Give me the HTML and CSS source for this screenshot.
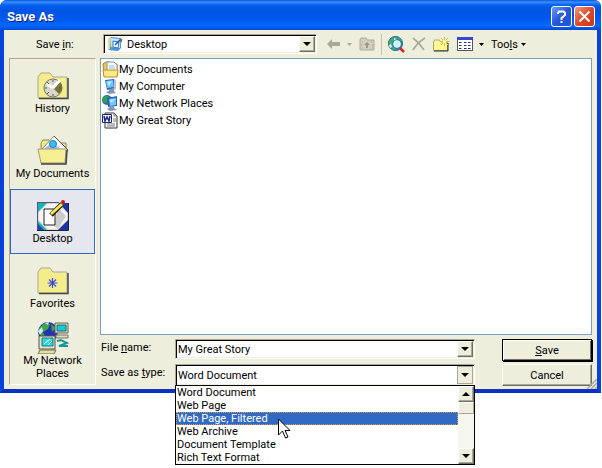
FILE: index.html
```html
<!DOCTYPE html>
<html lang="en">
<head>
    <meta charset="UTF-8">
    <meta name="viewport" content="width=device-width, initial-scale=1.0">
    <title>Save As</title>
    <link rel="stylesheet" href="styles.css">
</head>
<body>
    <form class="dialog">
        <header class="title-bar">
            <h1>Save As</h1>
            <button type="button" class="title-btn" aria-label="Help">
                <svg width="19" height="19" viewBox="0 0 19 19" fill="none" stroke="#fff" stroke-width="2"><path d="M6 7V6l1-1.500h4.500L13 6v2l-3.500 3v2M9.500 14v2"/></svg>
            </button>
            <button type="button" class="title-btn close" aria-label="Close">
                <svg width="19" height="19" viewBox="0 0 19 19" fill="none" stroke="#fff" stroke-width="2"><path d="M4.500 4.500l10 10M14.500 4.500l-10 10"/></svg>
            </button>
        </header>

        <div class="dialog-body">
            <div class="toolbar">
                <label class="save-in" for="folder">Save <u>i</u>n:</label>
                <div class="combo folder-combo">
                    <svg class="combo-icon" width="16" height="16" viewBox="0 0 16 16">
                        <path d="M1 3l3-2 10 1v10l-3 3-10-1z" fill="#4a94dc"/>
                        <path d="M1 3l3-2-1 12-2 1z" fill="#e9dc92"/>
                        <path d="M4 2l9 1v9l-9-1z" fill="#c4e6fa"/>
                        <path d="M6 5l6 1-1 6-5-1z" fill="#fff" stroke="#2878d0"/>
                        <path d="M8 9l6-6" stroke="#14559e" stroke-width="1.500"/>
                        <path d="M13 3h2v3h-1z" fill="#d4431b"/>
                    </svg>
                    <select id="folder"><option>Desktop</option></select>
                    <span class="arrow-btn"><svg width="8" height="4" viewBox="0 0 8 4"><path d="M0 0h8L4 4z"/></svg></span>
                </div>
                <div class="tools">
                    <button type="button" class="tool back" aria-label="Back">
                        <svg width="13" height="12" viewBox="0 0 13 12" fill="#aca899"><path d="M0 6l5-5v3h8v4H5v3z"/></svg>
                        <svg width="5" height="3" viewBox="0 0 5 3" fill="#aca899"><path d="M0 0h5L2.500 3z"/></svg>
                    </button>
                    <button type="button" class="tool up" aria-label="Up one level">
                        <svg width="16" height="14" viewBox="0 0 16 14">
                            <path d="M1 3l1-2h5l1 2h7v10H1z" fill="#d2cfbe" stroke="#aca899"/>
                            <path d="M5 8l3-3 3 3H9v3H7V8z" fill="#999685"/>
                            <path d="M3 5h1M12 5h1M3 11h1M13 11h1M13 8h1M2 8h1" stroke="#aca899"/>
                        </svg>
                    </button>
                    <span class="separator"></span>
                    <button type="button" class="tool" aria-label="Search the Web">
                        <svg width="17" height="17" viewBox="0 0 17 17">
                            <circle cx="7.500" cy="7.500" r="7" fill="#2f9ad0" stroke="#285b7e"/>
                            <path d="M1 6l3-4 4-1-1 3-3 2 1 3-2 2zM10 1l4 4-3 1zM3 12l3-2 1 4z" fill="#3fb45a"/>
                            <path d="M6 2l3 1-3 2zM1 9l2-1 1 3-2 1z" fill="#d7efff"/>
                            <circle cx="9" cy="8" r="3.500" fill="#c8f3fb" stroke="#fff"/>
                            <circle cx="9" cy="8" r="4.300" fill="none" stroke="#176984" stroke-width=".7"/>
                            <path d="M12 12l4 4" stroke="#d72a24" stroke-width="2.500"/>
                        </svg>
                    </button>
                    <button type="button" class="tool" aria-label="Delete">
                        <svg width="14" height="14" viewBox="0 0 14 14" fill="none" stroke="#aca899" stroke-width="1.600"><path d="M1 1c4 3 8 7 11 12M13 1C8 4 4 8 1 13"/></svg>
                    </button>
                    <button type="button" class="tool" aria-label="Create New Folder">
                        <svg width="17" height="15" viewBox="0 0 17 15">
                            <path d="M.5 13.500V5l1-2h5l1 2h7v8.500z" fill="#fffb91" stroke="#aaa778"/>
                            <path d="M1 14h14V6" fill="none" stroke="#282820"/>
                            <path d="M11.500 0v9M7 4.500h9.500M8 1l7 7M15 1L8 8" stroke="#dbc91f"/>
                            <circle cx="11.500" cy="4.500" r="1.500" fill="#fff"/>
                        </svg>
                    </button>
                    <button type="button" class="tool views" aria-label="Views">
                        <svg width="16" height="14" viewBox="0 0 16 14" shape-rendering="crispEdges">
                            <path d="M0 0h16v14H0z" fill="#555"/><path d="M1 3h14v10H1z" fill="#fff"/>
                            <path d="M0 0h16v3H0z" fill="#3848c6"/>
                            <path d="M2 5h2v1H2zM7 5h2v1H7zM11 5h2v1h-2zM2 8h2v1H2zM7 8h2v1H7zM11 8h2v1h-2zM2 11h2v1H2zM7 11h2v1H7zM11 11h2v1h-2z" fill="#24249a"/>
                            <path d="M4 5h1v1H4zM9 5h1v1H9zM13 5h1v1h-1zM4 8h1v1H4zM9 8h1v1H9zM13 8h1v1h-1zM4 11h1v1H4zM9 11h1v1H9zM13 11h1v1h-1z" fill="#999"/>
                        </svg>
                        <svg width="5" height="3" viewBox="0 0 5 3"><path d="M0 0h5L2.500 3z"/></svg>
                    </button>
                    <button type="button" class="tool tools-menu">
                        <span>Too<u>l</u>s</span>
                        <svg width="5" height="3" viewBox="0 0 5 3"><path d="M0 0h5L2.500 3z"/></svg>
                    </button>
                </div>
            </div>

            <nav class="places">
                <button type="button" class="place">
                    <svg width="32" height="32" viewBox="0 0 32 32">
                        <path d="M1 28V7l3-4h9l3 4h14v21z" fill="#f3ed8c" stroke="#aaa99e"/>
                        <path d="M2 28.500h29V8" fill="none" stroke="#444" stroke-width="1.500"/>
                        <circle cx="16" cy="18" r="9" fill="#d8d7ca" stroke="#77756a"/>
                        <path d="M16 18l7-6c3 4 3 8-1 12z" fill="#77733a"/>
                        <path d="M16 18l-6-4M16 18l7-8" stroke="#fff" stroke-width="3"/>
                        <path d="M16 10v2M16 24v2M8 18h2M22 18h2M10 12l2 2M10 24l2-2" stroke="#555"/>
                    </svg>
                    <span>History</span>
                </button>
                <button type="button" class="place">
                    <svg width="32" height="32" viewBox="0 0 32 32">
                        <path d="M4 28V8l2-3h6l2 3h15v20z" fill="#f0e97e" stroke="#8a8869"/>
                        <path d="M5 14L17 1l14 14-5 7H11z" fill="#f8f8ff" stroke="#888"/>
                        <path d="M17 1l14 14-2 2" fill="none" stroke="#555"/>
                        <path d="M8 13l4-3 8 1 5 4H9z" fill="#b9b5ed"/>
                        <circle cx="16" cy="9" r="3.500" fill="#35c2e8" stroke="#2879c5"/>
                        <path d="M1 14h28l-1 14H4z" fill="#f5ef91" stroke="#9d9a78"/>
                        <path d="M4 29h25l1-14" fill="none" stroke="#444" stroke-width="1.500"/>
                    </svg>
                    <span>My Documents</span>
                </button>
                <button type="button" class="place selected">
                    <svg width="32" height="32" viewBox="0 0 32 32">
                        <path d="M0 3h31v27H0z" fill="#d8d8d8"/>
                        <path d="M0 3h10L0 13zM0 20l10 10H0z" fill="#15b4b4"/>
                        <path d="M22 3h9v10zM31 20v10H21z" fill="#1f34a8"/>
                        <path d="M0 23l7 7H0z" fill="#2440b3"/>
                        <path d="M10 4h11l9 9v7l-9 9H11l-9-9v-8z" fill="#f6f6f6"/>
                        <path d="M21 8l8 8-8 13-4-3z" fill="#ccc"/>
                        <path d="M7 9h11v16H7z" fill="#fff" stroke="#222"/>
                        <path d="M14 15L25 4" stroke="#222" stroke-width="5"/>
                        <path d="M14 14L25 4" stroke="#f4ea45" stroke-width="3"/>
                        <circle cx="26" cy="2" r="2" fill="#d21919"/>
                        <path d="M0 2.500h22M.5 3v27" fill="none" stroke="#557"/>
                        <path d="M0 30.500h31.500V3" fill="none" stroke="#222"/>
                    </svg>
                    <span>Desktop</span>
                </button>
                <button type="button" class="place">
                    <svg width="32" height="32" viewBox="0 0 32 32">
                        <path d="M1 28V7l3-4h9l3 4h14v21z" fill="#f3ed8c" stroke="#aaa99e"/>
                        <path d="M2 28.500h29V8" fill="none" stroke="#444" stroke-width="1.500"/>
                        <path d="M15.500 13v10M10.500 18h10M12 14.500l7 7M19 14.500l-7 7" stroke="#3c48e0" stroke-width="1.200"/>
                    </svg>
                    <span>Favorites</span>
                </button>
                <button type="button" class="place">
                    <svg width="32" height="32" viewBox="0 0 32 32">
                        <circle cx="11" cy="10" r="10" fill="#2634b3"/>
                        <path d="M2 6l6-5 5 1-2 5-5 3 2 5-4 1zM14 2l5 4-4 4z" fill="#3ea44c"/>
                        <path d="M1 9l4-4 1 4-3 4zM8 1l4-1-1 3z" fill="#d7eadb"/>
                        <path d="M18 1h13v10H18z" fill="#ddd9c0" stroke="#66645a"/>
                        <path d="M20 3h9v6h-9z" fill="#19c6d1" stroke="#157679"/>
                        <path d="M19 13h12v3H19z" fill="#ddd9b0" stroke="#777"/>
                        <path d="M20 19l4-1 6 3-8 3h9" fill="none" stroke="#17959b" stroke-width="2"/>
                        <path d="M2 14h16v13H2z" fill="#e8e5d1" stroke="#55534b"/>
                        <path d="M5 16h11v8H5z" fill="#32d8df" stroke="#177b83"/>
                        <path d="M7 22l6-5M11 23l4-4" stroke="#e6ffff"/>
                        <path d="M3 28h16l-2 4H1z" fill="#e7dda0" stroke="#716c4a"/>
                    </svg>
                    <span>My Network Places</span>
                </button>
            </nav>

            <ul class="file-list">
                <li>
                    <svg width="17" height="17" viewBox="0 0 17 17"><path d="M1 3l3-2h4l1 2h6v12H2z" fill="#eac953" stroke="#ae841b"/><path d="M5 1h7l3 3v9H5z" fill="#f5fbff" stroke="#8198a9"/><path d="M7 5h5M7 7h6" stroke="#9bbdd5"/><path d="M1 9h15l-1 7H2z" fill="#ffe985" stroke="#b98d20"/></svg>
                    <span>My Documents</span>
                </li>
                <li>
                    <svg width="17" height="17" viewBox="0 0 17 17"><path d="M3 2l9-1 2 9-9 2z" fill="#2b62cb"/><path d="M4 3l7-1 1 7-7 1z" fill="#66c6fa"/><path d="M5 4l5-1-3 5z" fill="#c4f0ff"/><path d="M12 1l2 1v9l-2 1z" fill="#b6c3d6"/><path d="M7 11l5-1v3l2 2-7 1-3-2 3-1z" fill="#8694af"/></svg>
                    <span>My Computer</span>
                </li>
                <li>
                    <svg width="17" height="17" viewBox="0 0 17 17"><circle cx="5" cy="5" r="5" fill="#2469c9"/><path d="M1 3l4-3 2 3-3 5-3-1z" fill="#36a633"/><path d="M5 3l10-2v10l-9 1z" fill="#2b62cb"/><path d="M7 4l7-1v7l-6 1z" fill="#70cafa"/><path d="M8 5l5-1-4 4z" fill="#c4f0ff"/><path d="M8 12l4-1v2l3 2-7 1-3-2z" fill="#8694af"/></svg>
                    <span>My Network Places</span>
                </li>
                <li>
                    <svg width="17" height="17" viewBox="0 0 17 17"><path d="M5 1h7l3 3v12H3V1z" fill="#fff" stroke="#333"/><path d="M12 1v3h3M11 7h3M11 9h3M5 12h8M5 14h8" fill="none" stroke="#777"/><path d="M.5 2.500h9v8h-9z" fill="#fff" stroke="#1b237d"/><path d="M2 4l1 5 2-4 2 4 1-5" fill="none" stroke="#1b237d" stroke-width="1.500"/></svg>
                    <span>My Great Story</span>
                </li>
            </ul>

            <div class="fields">
                <label for="file-name">File <u>n</u>ame:</label>
                <div class="combo">
                    <input id="file-name" type="text" value="My Great Story">
                    <button type="button" class="arrow-btn" aria-label="Recent names"><svg width="8" height="4" viewBox="0 0 8 4"><path d="M0 0h8L4 4z"/></svg></button>
                </div>
                <button type="submit" class="btn default"><u>S</u>ave</button>

                <label for="file-type">Save as <u>t</u>ype:</label>
                <div class="combo type-combo">
                    <select id="file-type"><option>Word Document</option></select>
                    <span class="arrow-btn pressed"><svg width="8" height="4" viewBox="0 0 8 4"><path d="M0 0h8L4 4z"/></svg></span>
                    <div class="type-menu">
                        <ul role="listbox" aria-label="Save as type">
                            <li role="option">Word Document</li>
                            <li role="option">Web Page</li>
                            <li role="option" class="active" aria-selected="true">Web Page, Filtered</li>
                            <li role="option">Web Archive</li>
                            <li role="option">Document Template</li>
                            <li role="option">Rich Text Format</li>
                        </ul>
                        <div class="scrollbar">
                            <button type="button" class="arrow-btn" aria-label="Scroll up"><svg width="8" height="4" viewBox="0 0 8 4"><path d="M0 4h8L4 0z"/></svg></button>
                            <div class="thumb"></div>
                            <button type="button" class="arrow-btn down" aria-label="Scroll down"><svg width="8" height="4" viewBox="0 0 8 4"><path d="M0 0h8L4 4z"/></svg></button>
                        </div>
                        <svg class="cursor" width="13" height="21" viewBox="0 0 13 21"><path d="M.5 1v16l4-4 3 7 2.500-1-3-6.500H12z" fill="#fff" stroke="#000"/></svg>
                    </div>
                </div>
                <button type="button" class="btn">Cancel</button>
            </div>
        </div>
        <svg class="grip" width="10" height="10" viewBox="0 0 10 10" stroke="#aca899" stroke-width="1.500"><path d="M0 10L10 0M4 10l6-6M8 10l2-2"/></svg>
    </form>
</body>
</html>
```

FILE: styles.css
```css
* {
    box-sizing: border-box;
}
body {
    margin: 0;
    min-height: 100vh;
    background: #fff;
    color: #000;
    font-family: Roboto, "Liberation Sans", sans-serif;
    font-size: 11px;
    line-height: 13px;
}
button, input, select {
    margin: 0;
    padding: 0;
    border: 0;
    border-radius: 0;
    background: none;
    color: inherit;
    font: inherit;
}
ul {
    margin: 0;
    padding: 0;
    list-style: none;
}
svg {
    display: block;
    flex: none;
}

.dialog {
    position: relative;
    margin-right: 1px;
    border: solid #0842dc;
    border-width: 0 4px 4px;
    border-bottom-color: #0731c4;
    border-radius: 7px 7px 0 0;
    background: #eeeedd;
}
.title-bar {
    display: flex;
    align-items: center;
    gap: 2px;
    height: 30px;
    margin: 0 -4px;
    padding: 3px 6px 0 7px;
    border-radius: 7px 7px 0 0;
    background: linear-gradient(#0a50d8 0, #3a90ff 2px, #0560ee 5px, #0054e3 10px, #0058ec 18px, #0268ff 26px, #0048d0 30px);
}
.title-bar h1 {
    flex: 1;
    margin: 0;
    color: #fff;
    font-size: 13px;
    line-height: 16px;
    text-shadow: 1px 1px #0a1883;
}
.title-btn {
    width: 21px;
    height: 21px;
    border: 1px solid #fff;
    border-radius: 3px;
    background: linear-gradient(135deg, #6f9cf5, #2458d8 50%, #1e55d8);
}
.title-btn.close {
    background: linear-gradient(135deg, #f09a80, #e0492a 50%, #c83612);
}

.dialog-body {
    display: grid;
    grid-template-columns: 87px 1fr;
    grid-template-rows: 28px 1fr auto;
    column-gap: 4px;
    padding: 0 5px 3px;
}

/* toolbar */
.toolbar {
    grid-column: 1 / 3;
    display: flex;
    align-items: center;
}
.save-in {
    width: 94px;
    padding-left: 27px;
}
.combo {
    position: relative;
    display: flex;
    height: 20px;
    background: #fff;
    border: 1px solid;
    border-color: #aca899 #fff #fff #aca899;
    box-shadow: inset 1px 1px #000, inset -1px -1px #eeeedd;
}
.combo input, .combo select {
    flex: 1;
    min-width: 0;
    padding-left: 2px;
    appearance: none;
    outline: 0;
}
.folder-combo {
    width: 214px;
    padding-left: 3px;
}
.folder-combo select {
    padding-left: 4px;
}
.combo-icon {
    margin-top: 1px;
}
.arrow-btn {
    display: flex;
    align-items: center;
    justify-content: center;
    width: 16px;
    height: 16px;
    margin: 1px;
    border: 1px solid;
    border-color: #fff #716f64 #716f64 #fff;
    background: #eeeedd;
    box-shadow: inset -1px -1px #aca899;
}
.arrow-btn.pressed {
    height: auto;
    border-color: #aca899;
    box-shadow: none;
}
.tools {
    display: flex;
    align-items: center;
    margin-left: 10px;
}
.tool {
    display: flex;
    align-items: center;
    height: 22px;
    margin-right: 7px;
}
.back {
    gap: 7px;
}
.up {
    margin-right: 6px;
}
.separator {
    width: 1px;
    height: 21px;
    margin-right: 6px;
    background: #c5c2b2;
}
.views {
    gap: 6px;
}
.tools-menu {
    gap: 3px;
    margin: 0;
}

/* places bar */
.places {
    grid-row: 2 / 4;
    margin-bottom: 1px;
    border: 1px solid;
    border-color: #aca899 #fff #fff #aca899;
}
.place {
    display: flex;
    flex-direction: column;
    align-items: center;
    width: 100%;
    height: 65px;
    padding: 10px 8px 0;
    border: 1px solid transparent;
}
.place span {
    margin: 0 -8px;
}
.place:last-child {
    padding-top: 2px;
}
.place:last-child span {
    margin: 0;
}
.place.selected {
    border-color: #316ac5;
    background: #e6e6ee;
}

.file-list {
    padding: 2px 1px;
    border: 1px solid #7f9db9;
    background: #fff;
}
.file-list li {
    display: flex;
    align-items: center;
    height: 17px;
}

/* file name, type and buttons */
.fields {
    display: grid;
    grid-template-columns: 70px 1fr 90px;
    grid-template-rows: 22px 22px;
    column-gap: 4px;
    row-gap: 3px;
    padding: 4px 0 0 1px;
}
.fields label {
    padding-top: 2px;
}
.fields .combo {
    margin-right: 23px;
}
.fields .type-combo {
    height: 22px;
}
.btn {
    border: 1px solid;
    border-color: #fff #716f64 #716f64 #fff;
    background: #eeeedd;
    box-shadow: inset -1px -1px #aca899;
}
.btn.default {
    border: 1px solid #000;
    box-shadow: inset 1px 1px #fff, inset -1px -1px #716f64, 1px 1px #000;
}

.type-menu {
    position: absolute;
    top: 100%;
    left: -1px;
    right: -1px;
    display: flex;
    border: 1px solid #000;
    background: #fff;
}
.type-menu ul {
    flex: 1;
}
.type-menu li {
    padding-left: 1px;
}
.type-menu .active {
    background: #316ac5;
    color: #fff;
    outline: 1px dotted #d79b4b;
    outline-offset: -1px;
}
.scrollbar {
    display: flex;
    flex-direction: column;
    width: 16px;
    background: #f6f5ee;
}
.scrollbar .arrow-btn {
    margin: 0;
}
.thumb {
    height: 12px;
    border: 1px solid;
    border-color: #fff #aca899 #aca899 #fff;
    background: #eeeedd;
}
.scrollbar .down {
    margin-top: auto;
}
.cursor {
    position: absolute;
    left: 102px;
    top: 32px;
}
.grip {
    position: absolute;
    right: 0;
    bottom: 0;
}
```
